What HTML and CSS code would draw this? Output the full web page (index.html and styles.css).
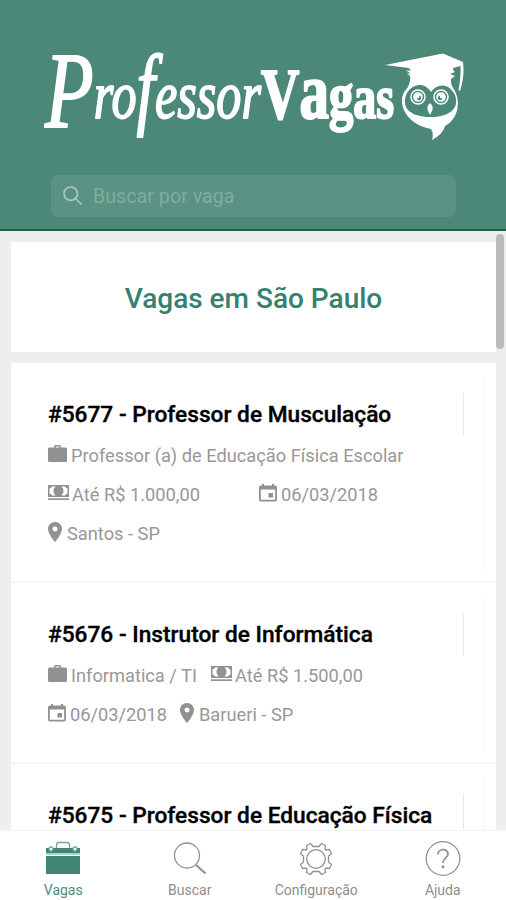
FILE: index.html
```html
<!DOCTYPE html>
<html lang="pt-BR">
<head>
<meta charset="utf-8">
<title>Professor Vagas</title>
<link rel="stylesheet" href="styles.css">
</head>
<body>
<svg class="defs" width="0" height="0">
  <symbol id="case" viewBox="0 0 19 17"><path d="M1.500 2.500H6V1L7 0h5l1 1v1.500h4.500Q19 2.500 19 4v11.500Q19 17 17.500 17h-16Q0 17 0 15.500V4Q0 2.500 1.500 2.500zM7.500 2.500h4v-1h-4z"/></symbol>
  <symbol id="money" viewBox="0 0 21 16"><path fill-rule="evenodd" d="M0 0h21v12H0zM4 1.500Q3.500 3 1.500 3.500v5Q3.500 9 4 10.500h3.500Q5.500 8.500 5.500 6T7.500 1.500zM17 1.500Q17.500 3 19.500 3.500v5Q17.500 9 17 10.500h-3.500Q15.500 8.500 15.500 6T13.500 1.500z"/><path d="M0 13.300h21v1.700H0z"/></symbol>
  <symbol id="date" viewBox="0 0 18 18"><path fill-rule="evenodd" d="M3 0h2v1.500h8V0h2v1.500h1Q18 1.500 18 3.500v12Q18 17.500 16 17.500H2Q0 17.500 0 15.500v-12Q0 1.500 2 1.500h1zM1.800 5.500v10.200h14.400V5.500z"/><path d="M9.500 9h4.500v4.500H9.500z"/></symbol>
  <symbol id="pin" viewBox="0 0 14 20"><path fill-rule="evenodd" d="M7 0C3 0 0 3 0 7c0 5 7 13 7 13s7-8 7-13c0-4-3-7-7-7zm0 4.500a2.500 2.500 0 1 1 0 5 2.500 2.500 0 0 1 0-5z"/></symbol>
</svg>
<div class="app">
  <header class="header">
    <svg class="logo" viewBox="40 48 430 96" width="430" height="96">
      <text class="script" x="45" y="118" textLength="216" lengthAdjust="spacingAndGlyphs"><tspan class="cap" dy="9">P</tspan><tspan dy="-9">ro</tspan><tspan class="tall">f</tspan><tspan>essor</tspan></text>
      <text class="slab" x="261" y="118" textLength="133" lengthAdjust="spacingAndGlyphs"><tspan class="v">V</tspan><tspan class="a">a</tspan><tspan class="g">g</tspan>as</text>
      <g fill="#fff">
        <path d="M385 65L443 53.500L463 62Q465 76 460 91L458.500 90Q461 77 460.500 66L453 68Q453 71 455 72L450 74L455 76L451 79Q450 84 455 91Q461 103 455 116Q451 123 445 126Q443 134 432 140Q434 134 431 129Q410 125 403 108Q399 96 408 87Q411 80 410 76L407 73L411 74L406 70L411 71L409 68Z"/>
        <path class="face" d="M431 92C425 82 413 83 407 93C400 108 411 117 430 117C449 117 460 109 455 95C449 83 437 83 431 92Z"/>
        <circle class="eye" cx="418" cy="97" r="7"/><circle cx="418" cy="97" r="4.800"/>
        <circle class="eye" cx="441" cy="97" r="7"/><circle cx="441" cy="97" r="4.800"/>
        <circle class="pupil" cx="419" cy="98" r="2.200"/><circle class="pupil" cx="440" cy="98" r="2.200"/>
        <circle cx="418" cy="97" r="1.200"/><circle cx="441" cy="97" r="1.200"/>
        <path d="M430 103Q434 106 432 111L430 115L428 111Q426 106 430 103Z"/>
      </g>
    </svg>
    <div class="search">
      <svg width="20" height="20" viewBox="0 0 20 20"><circle cx="7.700" cy="7.700" r="6.700"/><path d="M12.500 12.500L18.500 18.500"/></svg>
      <span>Buscar por vaga</span>
    </div>
  </header>
  <main class="list">
    <section class="card heading"><h1>Vagas em São Paulo</h1></section>
    <section class="card">
      <article class="item"><div class="inner">
        <h2>#5677 - Professor de Musculação</h2>
        <div class="row"><svg class="i-case"><use href="#case"/></svg><span>Professor (a) de Educação Física Escolar</span></div>
        <div class="row"><svg class="i-money"><use href="#money"/></svg><span class="wide">Até R$ 1.000,00</span><svg class="i-date"><use href="#date"/></svg><span>06/03/2018</span></div>
        <div class="row"><svg class="i-pin"><use href="#pin"/></svg><span>Santos - SP</span></div>
      </div></article>
      <article class="item"><div class="inner">
        <h2>#5676 - Instrutor de Informática</h2>
        <div class="row"><svg class="i-case"><use href="#case"/></svg><span class="field">Informatica / TI</span><svg class="i-money"><use href="#money"/></svg><span>Até R$ 1.500,00</span></div>
        <div class="row"><svg class="i-date"><use href="#date"/></svg><span class="day">06/03/2018</span><svg class="i-pin"><use href="#pin"/></svg><span>Barueri - SP</span></div>
      </div></article>
      <article class="item"><div class="inner">
        <h2>#5675 - Professor de Educação Física</h2>
      </div></article>
    </section>
    <div class="thumb"></div>
  </main>
  <nav class="tabs">
    <a class="tab active"><svg width="36" height="36" viewBox="0 0 36 36"><path class="fill" d="M1 7h34v5H1zM1 15h34v18H1z"/><path class="soft" d="M1 12h34v2H1z"/><path d="M11.500 7V4q0-2.500 2.500-2.500h8Q24.500 1.500 24.500 4v3"/><circle class="stud" cx="6" cy="8" r="2"/><circle class="stud" cx="30" cy="8" r="2"/></svg><span>Vagas</span></a>
    <a class="tab"><svg width="36" height="36" viewBox="0 0 36 36"><circle cx="15" cy="14.500" r="12.500"/><path class="handle" d="M24 24L33.500 32.500"/></svg><span>Buscar</span></a>
    <a class="tab"><svg width="36" height="36" viewBox="0 0 36 36"><circle cx="18" cy="18" r="9.300"/><path d="M15 5.500L12.500 2.500L8.500 4.500L9 8L8 9L4.500 8.500L2.500 12.500L5.500 15V21L2.500 23.500L4.500 27.500L8 27L9 28L8.500 31.500L12.500 33.500L15 30.500H21L23.500 33.500L27.500 31.500L27 28L28 27L31.500 27.500L33.500 23.500L30.500 21V15L33.500 12.500L31.500 8.500L28 9L27 8L27.500 4.500L23.500 2.500L21 5.500Z"/></svg><span>Configuração</span></a>
    <a class="tab"><svg width="36" height="36" viewBox="0 0 36 36"><circle cx="18" cy="17.500" r="16.800"/><path class="q" d="M13 13.500C13 7 23 7 23 13C23 17 18 17 18 22"/><circle class="dot" cx="18" cy="25.800" r="1.500"/></svg><span>Ajuda</span></a>
  </nav>
</div>
</body>
</html>
```
FILE: styles.css
```css
* { box-sizing: border-box; }
body { margin: 0; font-family: Roboto, sans-serif; background: #eee; }
.defs { position: absolute; }
.app { width: 506px; height: 900px; display: flex; flex-direction: column; overflow: hidden; }
.header { flex: none; height: 231px; padding-top: 48px; background: #4b8878; border-bottom: 2px solid #146352; }
.logo { display: block; margin-left: 40px; overflow: visible; }
.logo text { fill: #fff; font-family: "Liberation Serif", serif; stroke: #fff; stroke-linejoin: round; }
.script { font-size: 68px; font-style: italic; stroke-width: 1.8px; }
.cap { font-size: 108px; }
.tall { font-size: 90px; }
.slab { font-size: 62px; font-weight: 700; stroke-width: 2.2px; }
.v { font-size: 72px; }
.a { font-size: 80px; }
.g { font-size: 66px; }
.face { fill: #4b8878; }
.eye { fill: none; stroke: #fff; stroke-width: 1.5px; }
.pupil { fill: #4b8878; }
.search { display: flex; align-items: center; width: 405px; height: 42px; margin: 31px 0 0 51px; padding-left: 12px; gap: 10px; border-radius: 7px; background: #5a9283; color: #80ac9f; font-size: 19.7px; }
.search svg { fill: none; stroke: #a9c9c0; stroke-width: 1.7px; }
.list { flex: 1; min-height: 0; overflow: hidden; position: relative; padding: 11px 10px 0 11px; background: #eee; }
.card { background: #fff; margin-bottom: 11px; }
.heading { height: 110px; display: flex; align-items: center; justify-content: center; }
h1, h2 { margin: 0; font-weight: 500; white-space: nowrap; }
h1 { font-size: 28px; color: #368070; padding-top: 3px; }
.item { padding: 13px 12px 11px 0; border-bottom: 2px solid #f5f6f6; }
.inner { border-right: 1px solid #f3f4f4; padding: 17px 19px 17px 37px; }
h2 { font-size: 22.7px; height: 43px; line-height: 43px; color: #000; border-right: 1px solid #e6e8e8; -webkit-text-stroke: 0.35px #000; }
.row { display: flex; align-items: center; height: 39px; font-size: 18.25px; color: #989898; white-space: nowrap; }
.row svg { flex: none; fill: #919191; margin-top: -4px; }
.i-case { width: 19px; height: 17px; margin-right: 4px; }
.i-money { width: 21px; height: 16px; margin-right: 3px; }
.i-date { width: 18px; height: 18px; margin-right: 4px; }
.i-pin { width: 14px; height: 20px; margin-right: 5px; }
.wide { width: 187px; }
.field { width: 140px; }
.day { width: 110px; }
.thumb { position: absolute; right: 2px; top: 3px; width: 8px; height: 115px; border-radius: 4px; background: #bcbcbc; }
.tabs { flex: none; display: flex; height: 70px; border-top: 1px solid #f3f4f4; background: #fff; }
.tab { flex: 1; display: flex; flex-direction: column; align-items: center; padding-top: 10px; font-size: 14px; line-height: 16px; color: #8e8e8e; }
.tab svg { fill: none; stroke: #929292; stroke-width: 1.3px; margin-bottom: 5px; }
.tab.active { color: #4b8c7c; }
.tab.active svg { stroke: #73a699; }
.tab .fill { fill: #418575; stroke: none; }
.tab .soft { fill: #b5d1ca; stroke: none; }
.tab .stud { fill: #fff; }
.tab .handle { stroke-width: 2.2px; }
.tab .q { stroke-width: 1.8px; }
.tab .dot { fill: #929292; stroke: none; }
```
